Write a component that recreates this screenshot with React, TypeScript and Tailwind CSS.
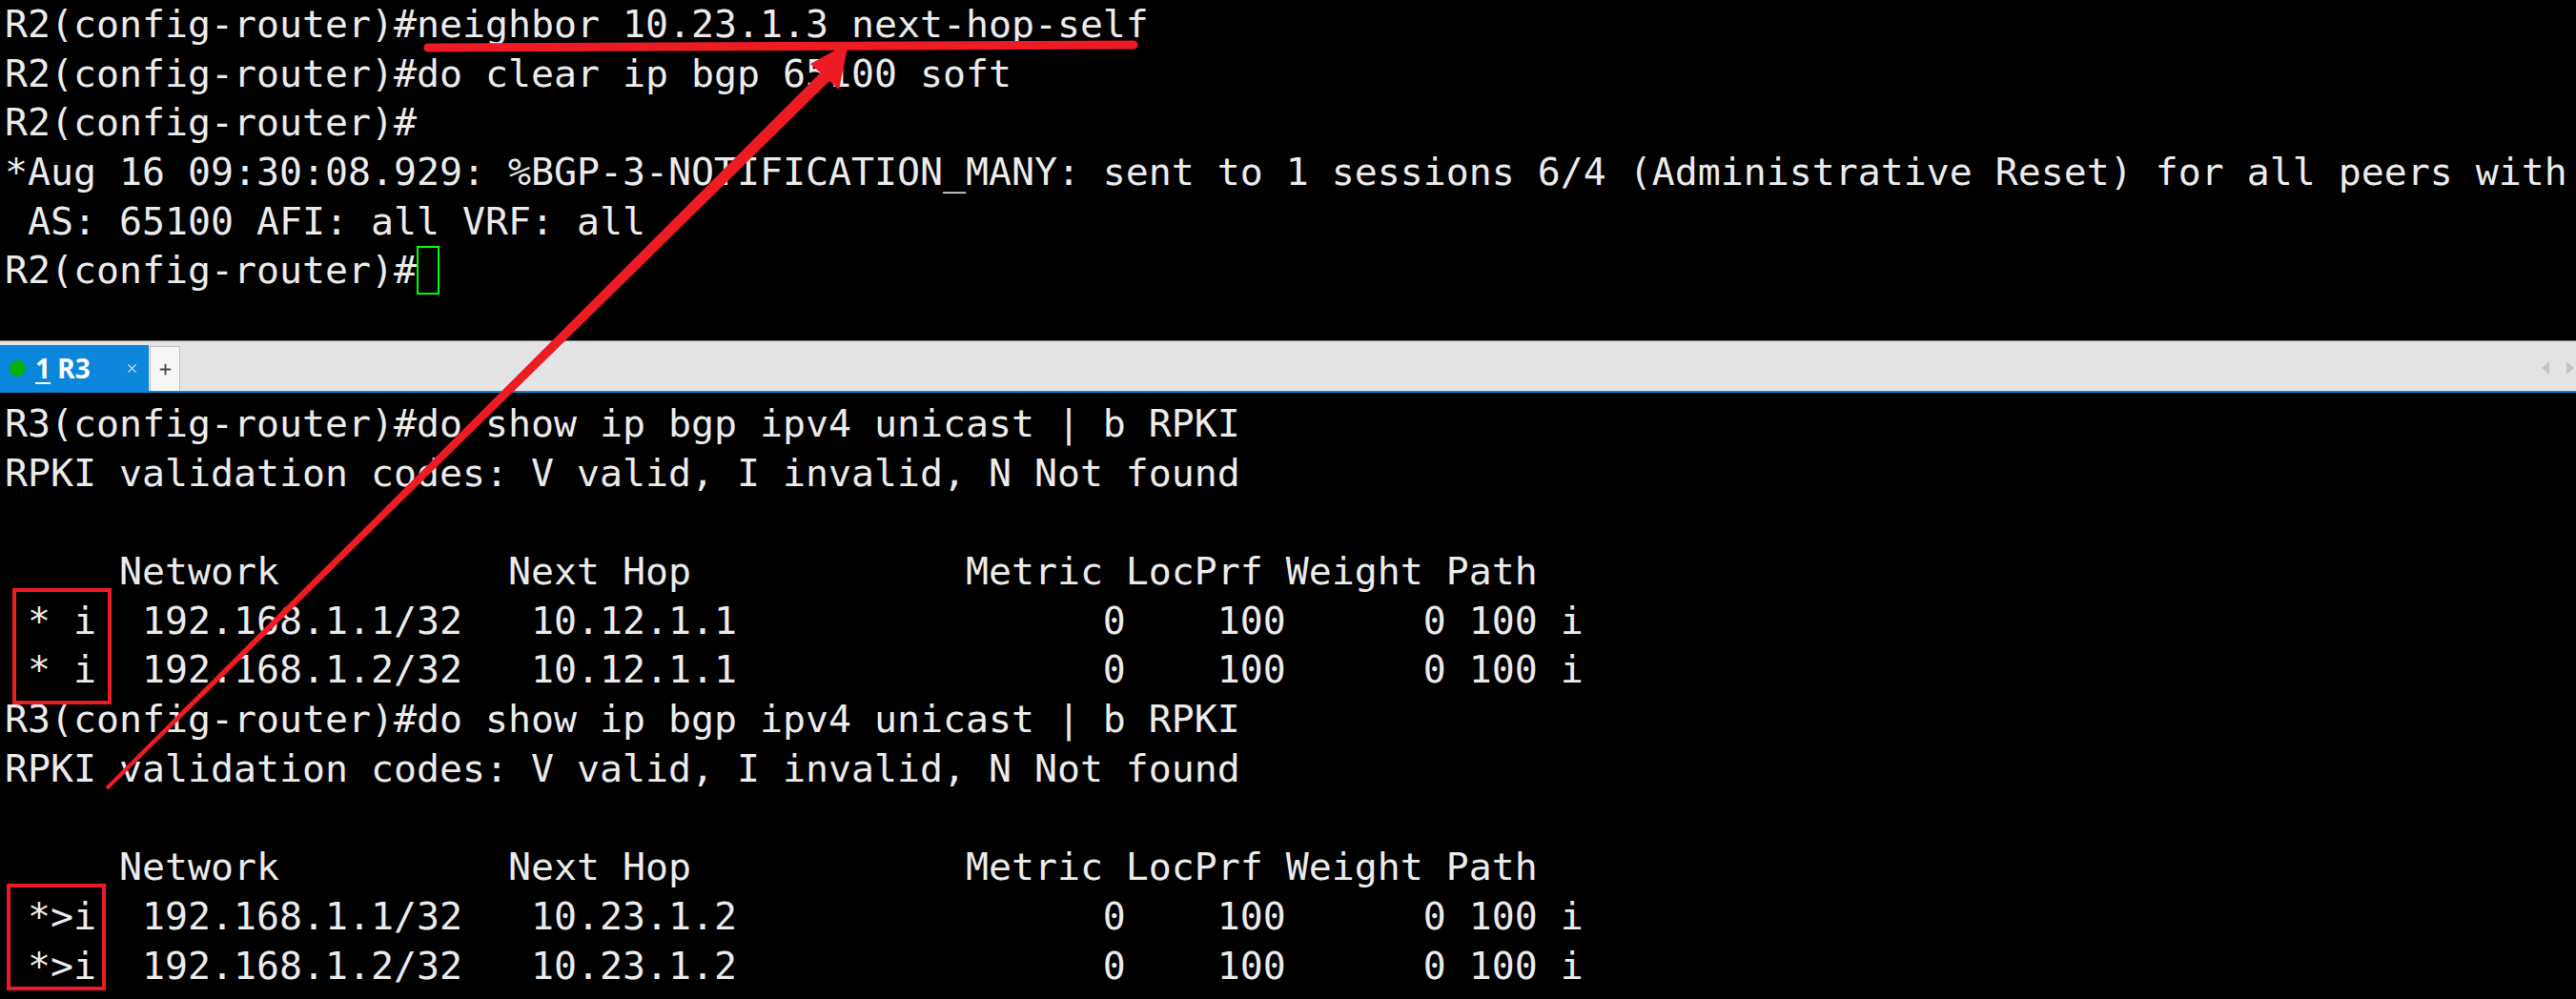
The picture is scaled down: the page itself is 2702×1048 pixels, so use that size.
import { Plus, X } from 'lucide-react';

const topLines = [
  'R2(config-router)#neighbor 10.23.1.3 next-hop-self',
  'R2(config-router)#do clear ip bgp 65100 soft',
  'R2(config-router)#',
  '*Aug 16 09:30:08.929: %BGP-3-NOTIFICATION_MANY: sent to 1 sessions 6/4 (Administrative Reset) for all peers with',
  ' AS: 65100 AFI: all VRF: all',
];

const header = '     Network          Next Hop            Metric LocPrf Weight Path';

const bottomLines = [
  'R3(config-router)#do show ip bgp ipv4 unicast | b RPKI',
  'RPKI validation codes: V valid, I invalid, N Not found',
  '',
  header,
  ' * i  192.168.1.1/32   10.12.1.1                0    100      0 100 i',
  ' * i  192.168.1.2/32   10.12.1.1                0    100      0 100 i',
  'R3(config-router)#do show ip bgp ipv4 unicast | b RPKI',
  'RPKI validation codes: V valid, I invalid, N Not found',
  '',
  header,
  ' *>i  192.168.1.1/32   10.23.1.2                0    100      0 100 i',
  ' *>i  192.168.1.2/32   10.23.1.2                0    100      0 100 i',
];

const mono = "font-['DejaVu_Sans_Mono',monospace] text-[39.86px] leading-[51.7px] text-[#ebebeb] whitespace-pre";

function Line({ text }: { text: string }) {
  return <div className="h-[51.7px]">{text || ' '}</div>;
}

export default function App() {
  return (
    <div className="relative w-[2702px] h-[1048px] bg-black overflow-hidden">
      {/* R2 session */}
      <div className={`h-[357px] pl-[5px] overflow-hidden ${mono}`}>
        {topLines.map((l, i) => (
          <Line key={i} text={l} />
        ))}
        <div className="h-[51.7px] flex">
          <span>R2(config-router)#</span>
          <span className="inline-block w-[24px] h-[51px] border-2 border-[#00ff00]" />
        </div>
      </div>

      <div className="h-px bg-[#7a7a7a]" />

      {/* tab strip */}
      <div className="h-[52px] bg-[#e4e4e4] flex items-end relative">
        <div className="w-[156px] h-[48px] bg-[#0a87da] flex items-center relative">
          <span className="ml-[10px] w-[17px] h-[17px] rounded-full bg-[#00b400] border border-[#169a16]" />
          <span className="ml-[10px] font-['Noto_Sans',sans-serif] font-bold text-[28px] text-white leading-none">
            <span className="underline underline-offset-[4px] decoration-2">1</span> R3
          </span>
          <X className="absolute left-[131px] top-[17px] text-[#b9d9f2]" size={15} strokeWidth={2} />
        </div>
        <div className="ml-px w-[32px] h-[47px] bg-[#f6f6f6] border border-[#bfbfbf] border-b-0 flex items-center justify-center">
          <Plus size={17} strokeWidth={2.6} className="text-[#474747]" />
        </div>
        <div className="ml-auto mr-[2px] mb-[17px] flex items-center gap-[18px]">
          <span className="w-0 h-0 border-y-[7px] border-y-transparent border-r-[8px] border-r-[#c4c4c4]" />
          <span className="w-0 h-0 border-y-[7px] border-y-transparent border-l-[8px] border-l-[#c4c4c4]" />
        </div>
      </div>
      <div className="h-[2px] bg-[#0a87da]" />

      {/* R3 session */}
      <div className={`pt-[7px] pl-[5px] ${mono}`}>
        {bottomLines.map((l, i) => (
          <Line key={i} text={l} />
        ))}
      </div>

      {/* screenshot annotations */}
      <svg className="absolute inset-0 pointer-events-none" width="2702" height="1048" viewBox="0 0 2702 1048">
        <line x1="449" y1="50" x2="1189" y2="47" stroke="#ed1c24" strokeWidth="9" strokeLinecap="round" />
        <polygon points="110.6,825.6 113.4,828.4 870.6,84.6 861.4,75.4" fill="#ed1c24" />
        <polygon points="890,45 850,67 880,94" fill="#ed1c24" />
        <rect x="15" y="619" width="100" height="118" fill="none" stroke="#ed1c24" strokeWidth="4" />
        <rect x="9" y="929" width="100" height="108" fill="none" stroke="#ed1c24" strokeWidth="4" />
      </svg>
    </div>
  );
}
